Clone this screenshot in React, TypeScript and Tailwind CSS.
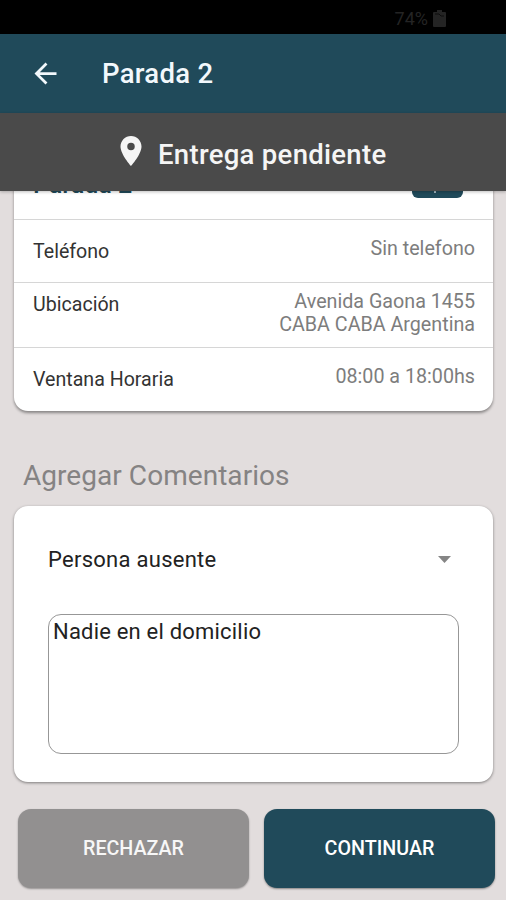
import { useState } from 'react';
import type { ReactNode } from 'react';

function StatusBar() {
  return (
    <div className="h-[34px] shrink-0 bg-black flex items-center justify-end pr-[60px] pt-[3px] gap-[5px] text-[#242424]">
      <span className="text-[18px] leading-none">74%</span>
      <svg className="w-[13px] h-[17px]" viewBox="0 0 13 17" fill="currentColor">
        <path d="M4 0h5v2h3a1 1 0 0 1 1 1v13a1 1 0 0 1-1 1H1a1 1 0 0 1-1-1V3a1 1 0 0 1 1-1h3z" />
        <path d="M2 4h4l2 2h3" fill="none" stroke="#0c0c0c" />
      </svg>
    </div>
  );
}

function Header() {
  return (
    <header className="h-[79px] shrink-0 bg-[#204a5a] flex items-center pl-[29px] text-[#f2f8fc]">
      <button aria-label="Volver">
        <svg className="w-[33px] h-[33px]" viewBox="0 0 24 24" fill="currentColor">
          <path d="M20 11H7.83l5.59-5.59L12 4l-8 8 8 8 1.41-1.41L7.83 13H20v-2z" />
        </svg>
      </button>
      <h1 className="ml-[40px] mt-px text-[27.500px] leading-8 font-medium tracking-[0.3px]">Parada 2</h1>
    </header>
  );
}

function StatusBanner() {
  return (
    <div className="h-[78px] shrink-0 bg-[#4a4a4a] flex items-center pl-[113px] text-[#f5f5f5] relative z-10 shadow-[0_1px_3px_rgba(0,0,0,0.25)]">
      <svg className="w-[36px] h-[36px] -mt-[2px]" viewBox="0 0 24 24" fill="currentColor">
        <path d="M12 2C8.13 2 5 5.13 5 9c0 5.25 7 13 7 13s7-7.75 7-13c0-3.87-3.13-7-7-7zm0 9.500a2.500 2.500 0 0 1 0-5 2.500 2.500 0 0 1 0 5z" />
      </svg>
      <h2 className="ml-[9px] mt-[5px] text-[27.500px] leading-8 font-medium tracking-[0.3px] whitespace-nowrap">Entrega pendiente</h2>
    </div>
  );
}

function Row({ label, className, children }: { label: string; className: string; children: ReactNode }) {
  return (
    <div className={`flex justify-between pl-[19px] pr-[18px] border-t border-[#d6d6d6] ${className}`}>
      <span className="text-[19.600px] leading-6 text-[#333] pt-[3px]">{label}</span>
      <span className="text-[19.700px] leading-[23px] text-[#7d7d7d] text-right">{children}</span>
    </div>
  );
}

export default function App() {
  const [comment, setComment] = useState('Nadie en el domicilio');

  return (
    <div className="w-[506px] h-[900px] flex flex-col overflow-hidden bg-[#e2dddd] font-[Roboto,sans-serif]">
      <StatusBar />
      <Header />
      <StatusBanner />

      <main className="flex-1 min-h-0 overflow-hidden">
        {/* card is scrolled partly under the banner */}
        <section className="-mt-[34px] ml-[14px] w-[479px] h-[254px] bg-white rounded-[14px] shadow-[0_2px_3px_rgba(0,0,0,0.4)]">
          <div className="h-[62px] flex justify-between pl-[19px] pr-[30px]">
            <span className="pt-[13px] text-[25px] leading-[30px] font-medium text-[#204a5a]">Parada 2</span>
            <span className="w-[51px] h-[41px] rounded-[6px] bg-[#204a5a] flex items-end justify-center pb-[5px]">
              <i className="w-[2px] h-[3px] mr-[6px] bg-[#9fb4bd]" />
            </span>
          </div>
          <Row label="Teléfono" className="h-[63px] pt-[17px]">Sin telefono</Row>
          <Row label="Ubicación" className="h-[65px] pt-[7px]">
            Avenida Gaona 1455
            <br />
            CABA CABA Argentina
          </Row>
          <Row label="Ventana Horaria" className="h-[64px] pt-[17px]">08:00 a 18:00hs</Row>
        </section>

        <h3 className="mt-[49px] ml-[23px] text-[28px] leading-8 tracking-[0.05px] text-[#858383]">Agregar Comentarios</h3>

        <section className="mt-[14px] ml-[14px] w-[479px] h-[276px] bg-white rounded-[14px] px-[34px] pt-[37px] shadow-[0_1px_3px_rgba(0,0,0,0.45)]">
          <button className="w-full h-8 pr-[8px] flex items-center justify-between text-[22px] tracking-[0.27px] text-[#222]">
            Persona ausente
            <svg className="w-[13px] h-[7px] text-[#858585]" viewBox="0 0 13 7" fill="currentColor">
              <path d="M0 0h13L6.500 7z" />
            </svg>
          </button>
          <textarea
            className="block mt-[39px] w-[411px] h-[140px] rounded-[13px] border border-[#979797] px-1 pt-[4px] text-[22px] leading-[26px] tracking-[0.2px] text-[#222] resize-none outline-none"
            value={comment}
            onChange={(e) => setComment(e.target.value)}
          />
        </section>

        <div className="mt-[27px] ml-[18px] flex gap-[15px] text-[19.700px] font-medium text-white">
          <button className="w-[231px] h-[79px] rounded-[13px] bg-[#929090] text-[#f7f7f7] shadow-[0_1px_2px_rgba(0,0,0,0.35)]">RECHAZAR</button>
          <button className="w-[231px] h-[79px] rounded-[13px] bg-[#204a5a] shadow-[0_1px_2px_rgba(0,0,0,0.4)]">CONTINUAR</button>
        </div>
      </main>
    </div>
  );
}
